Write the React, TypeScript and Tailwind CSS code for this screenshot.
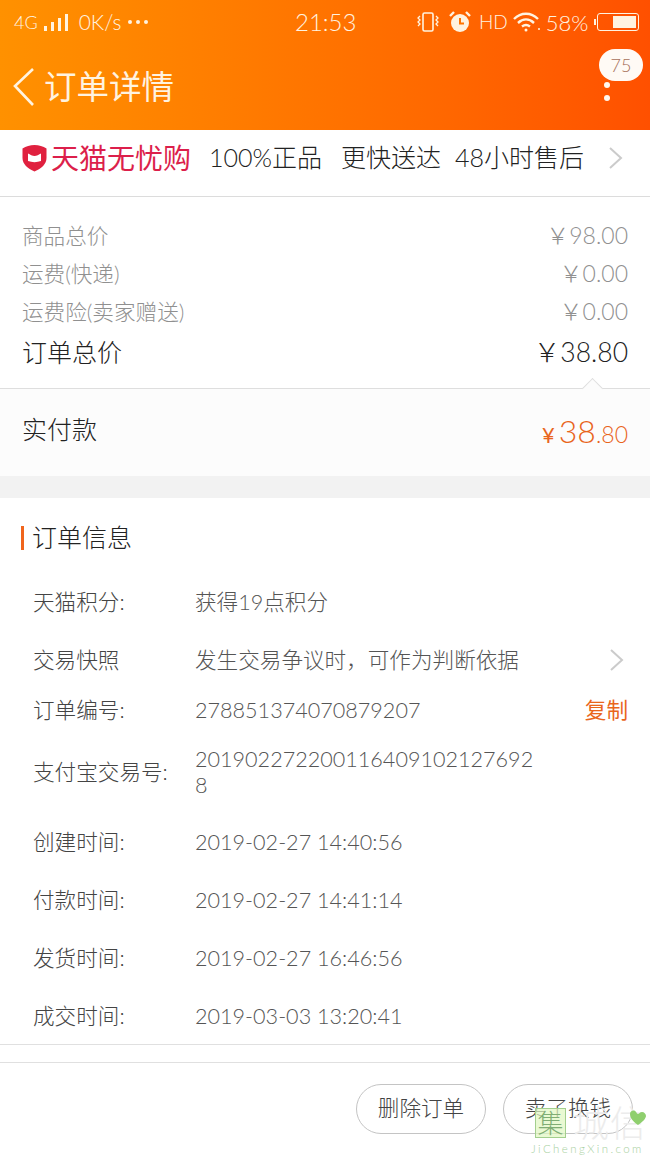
const prices = [
  { label: '商品总价', value: '￥98.00' },
  { label: '运费(快递)', value: '￥0.00' },
  { label: '运费险(卖家赠送)', value: '￥0.00' },
];

const infoTop = [
  { label: '天猫积分:', value: '获得19点积分', h: 'h-[58px]' },
  { label: '交易快照', value: '发生交易争议时，可作为判断依据', h: 'h-[58px]', arrow: true },
  { label: '订单编号:', value: '278851374070879207', h: 'h-[42px]', copy: true },
];

const infoTimes = [
  { label: '创建时间:', value: '2019-02-27 14:40:56' },
  { label: '付款时间:', value: '2019-02-27 14:41:14' },
  { label: '发货时间:', value: '2019-02-27 16:46:56' },
  { label: '成交时间:', value: '2019-03-03 13:20:41' },
];

function Arrow() {
  return (
    <svg width="16" height="24" viewBox="0 0 16 24" fill="none" stroke="#cbcbcb" strokeWidth="2">
      <path d="M2 2l11 10L2 22" />
    </svg>
  );
}

function StatusBar() {
  return (
    <div className="flex h-[44px] items-center pl-[14px] pr-[11px] text-[#fff3e0]">
      <div className="flex w-[281px] items-center">
        <span className="text-[18px]">4G</span>
        <div className="ml-[6px] flex items-end gap-[4px]">
          <span className="h-[5px] w-[3px] bg-[#fff3e0]" />
          <span className="h-[9px] w-[3px] bg-[#fff3e0]" />
          <span className="h-[13px] w-[3px] bg-[#fff3e0]" />
          <span className="h-[17px] w-[3px] bg-[#fff3e0]" />
        </div>
        <span className="ml-[11px] text-[21px]">0K/s</span>
        <div className="ml-[6px] flex gap-[4px]">
          <span className="h-[4px] w-[4px] rounded-full bg-[#fff3e0]" />
          <span className="h-[4px] w-[4px] rounded-full bg-[#fff3e0]" />
          <span className="h-[4px] w-[4px] rounded-full bg-[#fff3e0]" />
        </div>
      </div>
      <span className="w-[121px] text-[24px]">21:53</span>
      <svg width="24" height="22" viewBox="0 0 24 22" fill="none" stroke="#fff3e0" strokeWidth="1.6">
        <rect x="7" y="2" width="10" height="18" rx="1.5" />
        <path d="M4 5l-2 2 2 2-2 2 2 2-2 2M20 5l2 2-2 2 2 2-2 2 2 2" strokeWidth="1.3" />
      </svg>
      <svg className="ml-[9px]" width="22" height="22" viewBox="0 0 22 22">
        <circle cx="11" cy="12" r="9" fill="#fff3e0" />
        <path d="M11 7v5.5h4" fill="none" stroke="#ff7400" strokeWidth="2" />
        <path d="M1 5l4-4M21 5l-4-4" stroke="#fff3e0" strokeWidth="2.4" />
      </svg>
      <span className="ml-[8px] text-[19px]">HD</span>
      <svg className="ml-[5px]" width="28" height="20" viewBox="0 0 28 20" fill="none" stroke="#fff3e0" strokeWidth="2.4">
        <path d="M1 7c7-7 17-7 24 0M5 11c5-4.600 11-4.600 16 0M9 14.500c2.500-2 5.500-2 8 0" />
        <circle cx="13" cy="18" r="1.500" fill="#fff3e0" stroke="none" />
        <circle cx="26" cy="17" r="1" fill="#fff3e0" stroke="none" />
      </svg>
      <span className="ml-[5px] text-[22px]">58%</span>
      <div className="relative ml-auto flex h-[18px] w-[42px] justify-end rounded-[3px] border border-[#fff3e0] p-[2px]">
        <span className="absolute left-[-4px] top-[5px] h-[6px] w-[2px] bg-[#fff3e0]" />
        <span className="h-full w-[23px] bg-[#fff3e0]" />
      </div>
    </div>
  );
}

export default function App() {
  return (
    <div className="relative h-[1155px] w-[650px] overflow-hidden bg-white font-['Lato','Noto_Sans_CJK_SC',sans-serif] font-light text-[#555]">
      <header className="h-[130px] bg-gradient-to-r from-[#ff9100] to-[#ff5000]">
        <StatusBar />
        <div className="relative flex h-[86px] items-center pl-[12px] text-[#fff3e0]">
          <svg width="24" height="40" viewBox="0 0 24 40" fill="none" stroke="#fff3e0" strokeWidth="2.6">
            <path d="M21 2L3 19l18 19" />
          </svg>
          <h1 className="ml-[8px] text-[32.5px] font-normal">订单详情</h1>
          <div className="absolute right-[7px] top-[5px] flex h-[32px] w-[44px] items-center justify-center rounded-full bg-[#fffaf5] text-[18px] text-[#a8705a]">
            75
          </div>
          <div className="absolute right-[40px] top-[38px] flex flex-col gap-[7px]">
            <span className="h-[6px] w-[6px] rounded-full bg-[#fff8f0]" />
            <span className="h-[6px] w-[6px] rounded-full bg-[#fff8f0]" />
          </div>
        </div>
      </header>

      <div className="flex h-[67px] items-center border-b border-[#dcdcdc] pb-[10px] pl-[22px] pr-[26px]">
        <svg width="25" height="28" viewBox="0 0 25 28">
          <path d="M12.500 1C17 1 21 2.500 24.500 4.500V14c0 6-5 10.500-12 13.500C5.500 24.500.5 20 .5 14V4.500C4 2.500 8 1 12.500 1z" fill="#e0213f" />
          <path d="M6 9.500c2 1 4.500 2.500 6.500 2.500s4.500-1.500 6.500-2.500V17c-4 1.500-9 1.500-13 0z" fill="#fff" />
        </svg>
        <span className="ml-[4px] text-[28px] font-normal text-[#dc1f4b]">天猫无忧购</span>
        <span className="ml-[18px] text-[25px] text-[#222]">100%正品</span>
        <span className="ml-[19px] text-[25px] text-[#222]">更快送达</span>
        <span className="ml-[14px] text-[25px] text-[#222]">48小时售后</span>
        <div className="ml-auto"><Arrow /></div>
      </div>

      <section className="px-[22px] pt-[20px]">
        {prices.map((p) => (
          <div key={p.label} className="flex h-[38px] items-center justify-between text-[21.6px] text-[#909090]">
            <span>{p.label}</span>
            <span className="pb-[2px] text-[23px]">{p.value}</span>
          </div>
        ))}
        <div className="flex h-[44px] items-center justify-between text-[25px] text-[#222]">
          <span>订单总价</span>
          <span className="text-[26.5px]">￥38.80</span>
        </div>
      </section>

      <div className="relative mt-[13px] flex h-[88px] items-center justify-between border-t border-[#dedede] bg-[#fcfcfc] px-[22px] pb-[5px] text-[25px] text-[#222]">
        <span className="absolute right-[50px] top-[-8px] h-[15px] w-[15px] rotate-45 border-l border-t border-[#dedede] bg-[#fcfcfc]" />
        <span>实付款</span>
        <span className="mb-[-1px] flex items-baseline font-normal text-[#e9651c]">
          <span className="text-[22px]">¥</span>
          <span className="ml-[4px] text-[32px] font-light">38</span>
          <span className="text-[23px] font-light">.80</span>
        </span>
      </div>

      <div className="h-[22px] bg-[#f2f2f2]" />

      <section>
        <div className="flex h-[75px] items-center pl-[21px] pt-[4px] text-[25px] text-[#222]">
          <span className="mr-[8px] h-[24px] w-[3px] bg-[#f0651d]" />
          订单信息
        </div>
        {infoTop.map((r) => (
          <div key={r.label} className={`flex items-center pl-[33px] pr-[22px] text-[21.6px] ${r.h}`}>
            <span className="w-[162px] shrink-0 text-[#444]">{r.label}</span>
            <span>{r.value}</span>
            {r.arrow && <div className="ml-auto mr-[3px]"><Arrow /></div>}
            {r.copy && <span className="ml-auto font-normal text-[#e9651c]">复制</span>}
          </div>
        ))}
        <div className="flex h-[82px] items-center pl-[33px] text-[21.6px]">
          <span className="w-[162px] shrink-0 text-[#444]">支付宝交易号:</span>
          <span className="w-[340px] break-all leading-[26px]">2019022722001164091021276928</span>
        </div>
        {infoTimes.map((r) => (
          <div key={r.label} className="flex h-[58px] items-center pl-[33px] text-[21.6px]">
            <span className="w-[162px] shrink-0 text-[#444]">{r.label}</span>
            <span>{r.value}</span>
          </div>
        ))}
      </section>

      <div className="mt-[-1px] h-[19px] border-y border-[#e0e0e0]" />

      <footer className="flex justify-end gap-[17px] pr-[17px] pt-[21px]">
        <button className="h-[50px] w-[130px] rounded-full border border-[#c4c4c4] pb-[2px] text-[21.6px] text-[#444]">删除订单</button>
        <button className="h-[50px] w-[130px] rounded-full border border-[#c4c4c4] pb-[2px] text-[21.6px] text-[#444]">卖了换钱</button>
      </footer>

      {/* site watermark */}
      <div className="absolute bottom-0 right-0 flex h-[47px] w-[119px] flex-col">
        <div className="relative flex items-center pl-[4px]">
          <span className="flex h-[30px] w-[31px] items-center justify-center border border-[#a3cf8e] bg-[#e0f7c0]/70 text-[26px] leading-none text-[#7fae74]">集</span>
          <span className="ml-[7px] text-[36px] leading-[30px] tracking-[1px] text-[#ececec]">城信</span>
          <svg className="absolute right-[3px] top-0" width="18" height="18" viewBox="0 0 18 18">
            <path d="M9 17C3 13 1 9 1 6c0-3 4-5 6-2 1 1 1 2 2 2s2-2 4-2 4 2 4 4-3 6-8 9z" fill="#8fcf6e" />
          </svg>
        </div>
        <span className="mt-[5px] whitespace-nowrap text-[11.5px] leading-none tracking-[2.4px] text-[#a8d0a0]">JiChengXin.com</span>
      </div>
    </div>
  );
}
